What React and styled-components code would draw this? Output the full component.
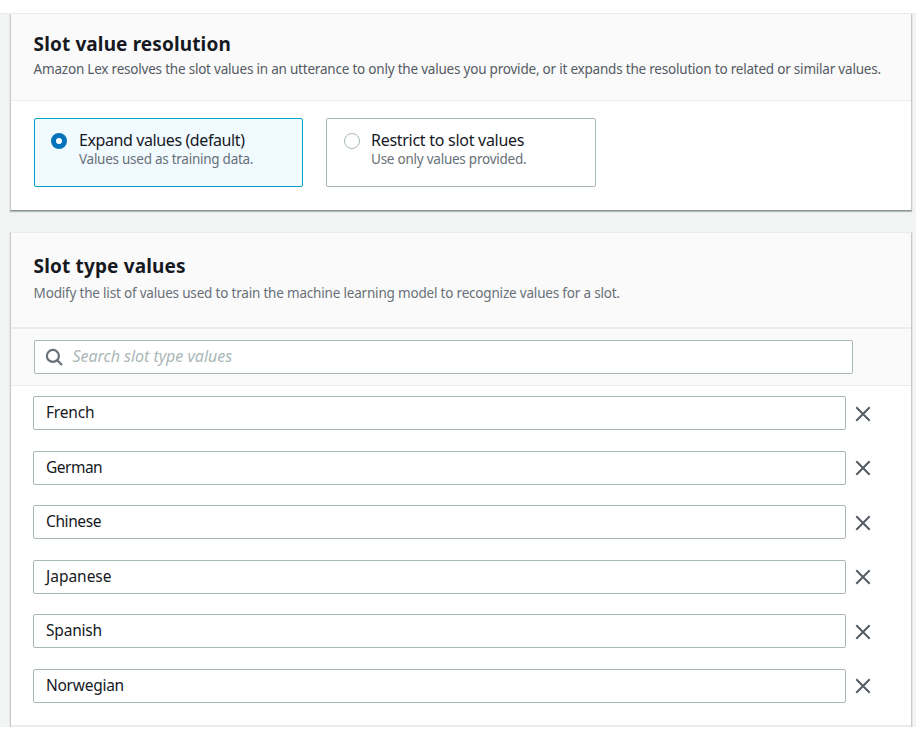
import React from "react";
import styled, { createGlobalStyle } from "styled-components";

const GlobalStyle = createGlobalStyle`
  *, *::before, *::after { box-sizing: border-box; }
  body {
    margin: 0;
    background: #fff;
    color: #16191f;
    font-family: "Noto Sans", "Open Sans", sans-serif;
    overflow: hidden;
  }
`;

const Page = styled.main`
  width: 916px;
  height: 714px;
  margin-top: 13px;
  padding: 0 4px 0 10px;
  background: #f2f3f3;
  border-top: 1px solid #e9ebeb;
  overflow: hidden;
`;

const Panel = styled.section`
  width: 902px;
  height: ${(p) => p.$height}px;
  margin-bottom: 21px;
  background: #fff;
  border: 1px solid #c6caca;
  border-top: ${(p) => (p.$topLine ? "1px solid #eaeded" : "0")};
  border-bottom: 1px solid #879596;
  box-shadow: 0 1px 1px 0 rgba(0, 28, 36, 0.25);
`;

const Header = styled.header`
  height: ${(p) => p.$height}px;
  padding: ${(p) => p.$top}px 22px 0 22.6px;
  background: #fafafa;
  border-bottom: ${(p) => p.$line}px solid #eaeded;
`;

const Title = styled.h2`
  margin: 0;
  font-size: 19px;
  line-height: 26px;
  font-weight: 700;
  letter-spacing: ${(p) => p.$track}px;
  white-space: nowrap;
`;

const Description = styled.p`
  margin: ${(p) => p.$gap}px 0 0;
  font-size: 13.5px;
  line-height: 20px;
  letter-spacing: ${(p) => p.$track}px;
  color: ${(p) => p.$color};
  white-space: nowrap;
`;

const Tiles = styled.div`
  display: grid;
  grid-template-columns: 269px 270px;
  gap: 23px;
  padding: 17px 23px;
`;

const Tile = styled.label`
  display: flex;
  gap: ${(p) => (p.$selected ? 12 : 11)}px;
  height: 69px;
  padding: 12px 16px 0 ${(p) => (p.$selected ? 16 : 17)}px;
  border: 1px solid ${(p) => (p.$selected ? "#00a1c9" : "#aab7b8")};
  border-radius: 2px;
  background: ${(p) => (p.$selected ? "#f1faff" : "#fff")};
`;

const Radio = styled.span`
  flex: none;
  width: 16px;
  height: 16px;
  margin-top: 2px;
  border-radius: 50%;
  border: ${(p) => (p.$selected ? "5px solid #0073bb" : "1px solid #aab7b8")};
  background: #fff;
`;

const TileTitle = styled.div`
  font-size: 16px;
  line-height: 18px;
  letter-spacing: ${(p) => p.$track}px;
  white-space: nowrap;
`;

const TileNote = styled.div`
  margin-top: 1px;
  font-size: 13.5px;
  line-height: 18px;
  letter-spacing: ${(p) => p.$track}px;
  color: #687078;
  white-space: nowrap;
`;

const SearchBar = styled.div`
  height: 57px;
  padding: 11px 23px 0;
  background: #fafafa;
  border-bottom: 1px solid #eaeded;
`;

const SearchField = styled.div`
  display: flex;
  align-items: center;
  gap: 9.5px;
  width: 819px;
  height: 34px;
  padding-left: 10px;
  background: #fff;
  border: 1px solid #aab7b8;
  border-radius: 2px;
`;

const Placeholder = styled.span`
  padding-bottom: 2px;
  font-size: 16px;
  line-height: 20px;
  font-style: italic;
  letter-spacing: ${(p) => p.$track}px;
  color: #aab7b8;
`;

const ValueList = styled.div`
  display: grid;
  gap: 20.6px;
  padding: 10px 22px 0;
`;

const ValueRow = styled.div`
  display: flex;
  align-items: center;
  gap: 9px;
  height: 34px;
`;

const ValueField = styled.div`
  width: 813px;
  height: 34px;
  padding: 0 12px;
  border: 1px solid #aab7b8;
  border-radius: 2px;
  font-size: 15.5px;
  line-height: 30.6px;
  letter-spacing: ${(p) => p.$track}px;
`;

const RemoveButton = styled.button`
  display: flex;
  padding: 1px 0 0;
  border: 0;
  background: none;
`;

const Footer = styled.div`
  height: 3px;
  margin-top: 22px;
  background: #eaeded;
`;

const values = [
  ["French", -0.2],
  ["German", -0.5],
  ["Chinese", -0.4],
  ["Japanese", -0.02],
  ["Spanish", -0.2],
  ["Norwegian", -0.27],
];

function SearchIcon() {
  return (
    <svg width="18" height="18" viewBox="0 0 18 18" fill="none" stroke="#687078" strokeWidth="2.2">
      <circle cx="7.9" cy="7.9" r="6" />
      <path d="M12.2 12.2 17 17" />
    </svg>
  );
}

function CloseIcon() {
  return (
    <svg width="16" height="16" viewBox="0 0 16 16" fill="none" stroke="#545b64" strokeWidth="2">
      <path d="M1.3 1.3 14.7 14.7M14.7 1.3 1.3 14.7" />
    </svg>
  );
}

export default function App() {
  return (
    <>
      <GlobalStyle />
      <Page>
        <Panel $height={197}>
          <Header $height={87} $top={17} $line={1}>
            <Title $track={0.12}>Slot value resolution</Title>
            <Description $gap={2} $track={-0.21} $color="#545b64">
              Amazon Lex resolves the slot values in an utterance to only the values you provide, or it expands the resolution to related or similar values.
            </Description>
          </Header>
          <Tiles>
            <Tile $selected>
              <Radio $selected />
              <div>
                <TileTitle $track={-0.4}>Expand values (default)</TileTitle>
                <TileNote $track={-0.26}>Values used as training data.</TileNote>
              </div>
            </Tile>
            <Tile>
              <Radio />
              <div>
                <TileTitle $track={-0.28}>Restrict to slot values</TileTitle>
                <TileNote $track={-0.24}>Use only values provided.</TileNote>
              </div>
            </Tile>
          </Tiles>
        </Panel>
        <Panel $height={520} $topLine>
          <Header $height={96} $top={20} $line={2}>
            <Title $track={0.15}>Slot type values</Title>
            <Description $gap={4} $track={-0.19} $color="#687078">
              Modify the list of values used to train the machine learning model to recognize values for a slot.
            </Description>
          </Header>
          <SearchBar>
            <SearchField>
              <SearchIcon />
              <Placeholder $track={-0.04}>Search slot type values</Placeholder>
            </SearchField>
          </SearchBar>
          <ValueList>
            {values.map(([name, track]) => (
              <ValueRow key={name}>
                <ValueField $track={track}>{name}</ValueField>
                <RemoveButton aria-label={`Remove ${name}`}>
                  <CloseIcon />
                </RemoveButton>
              </ValueRow>
            ))}
          </ValueList>
          <Footer />
        </Panel>
      </Page>
    </>
  );
}
